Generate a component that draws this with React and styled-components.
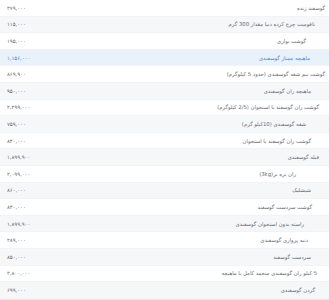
import styled, { createGlobalStyle } from "styled-components";

const GlobalStyle = createGlobalStyle`
  html, body {
    margin: 0;
    padding: 0;
    background: #ffffff;
    overflow: hidden;
  }
`;

const items = [
  { name: "گوسفند زنده", price: "۳۷۹,۰۰۰", shift: 4 },
  { name: "تاقومیت چرخ کرده دنیا مقدار 300 گرم", price: "۱۱۵,۰۰۰", shift: 14 },
  { name: "گوشت نواری", price: "۱۹۵,۰۰۰", shift: 23 },
  { name: "ماهیچه ممتاز گوسفندی", price: "۱,۱۵۶,۰۰۰", shift: 19, active: true },
  { name: "گوشت نیم شقه گوسفندی (حدود 5 کیلوگرم)", price: "۸۶۹,۹۰۰", shift: 4 },
  { name: "ماهیچه ران گوسفندی", price: "۹۵۰,۰۰۰", shift: 18 },
  { name: "گوشت ران گوسفند با استخوان (2/5 کیلوگرم)", price: "۲,۲۹۹,۰۰۰", shift: 10 },
  { name: "شقه گوسفندی (10کیلو گرم)", price: "۷۵۹,۰۰۰", shift: 23 },
  { name: "گوشت ران گوسفند با استخوان", price: "۸۴۰,۰۰۰", shift: 18 },
  { name: "فیله گوسفندی", price: "۱,۸۹۹,۹۰۰", shift: 10 },
  { name: "ران بره نر(3kg)", price: "۲,۰۹۹,۰۰۰", shift: 33 },
  { name: "شیشلیک", price: "۸۶۰,۰۰۰", shift: 18 },
  { name: "گوشت سردست گوسفند", price: "۸۴۰,۰۰۰", shift: 17 },
  { name: "راسته بدون استخوان گوسفندی", price: "۱,۸۹۹,۹۰۰", shift: 25 },
  { name: "دنبه پرواری گوسفندی", price: "۲۸۹,۰۰۰", shift: 21 },
  { name: "سردست گوسفند", price: "۸۵۰,۰۰۰", shift: 18 },
  { name: "5 کیلو ران گوسفندی منجمد کامل با ماهیچه", price: "۳,۸۰۰,۰۰۰", shift: 12 },
  { name: "گردن گوسفندی", price: "۶۹۹,۰۰۰", shift: 14 },
];

export default function App() {
  return (
    <>
      <GlobalStyle />
      <SCPriceList>
        {items.map((item, i) => (
          <SCRow key={i} $striped={i % 2 === 1} $active={item.active}>
            <SCName $shift={item.shift}>{item.name}</SCName>
            <SCPrice>{item.price}</SCPrice>
          </SCRow>
        ))}
      </SCPriceList>
      <SCFooter />
    </>
  );
}

const SCPriceList = styled.div`
  width: 329px;
  display: flex;
  flex-direction: column;
  direction: rtl;
`;

const SCRow = styled.div`
  height: 16.6px;
  box-sizing: border-box;
  display: flex;
  align-items: center;
  justify-content: space-between;
  border-bottom: 1px solid #f2f3f5;
  background: ${(p) => (p.$active ? "#e9f1fb" : p.$striped ? "#f6f7f9" : "#ffffff")};
  color: ${(p) => (p.$active ? "#4a84d4" : "#666a70")};
  font-family: "DejaVu Sans", "Noto Sans", sans-serif;
  font-size: 5.3px;
`;

const SCName = styled.span`
  padding-right: ${(p) => p.$shift}px;
  white-space: nowrap;
`;

const SCPrice = styled.span`
  padding-left: 7px;
  direction: ltr;
`;

const SCFooter = styled.div`
  height: 2px;
  background: #f1e4e1;
`;
